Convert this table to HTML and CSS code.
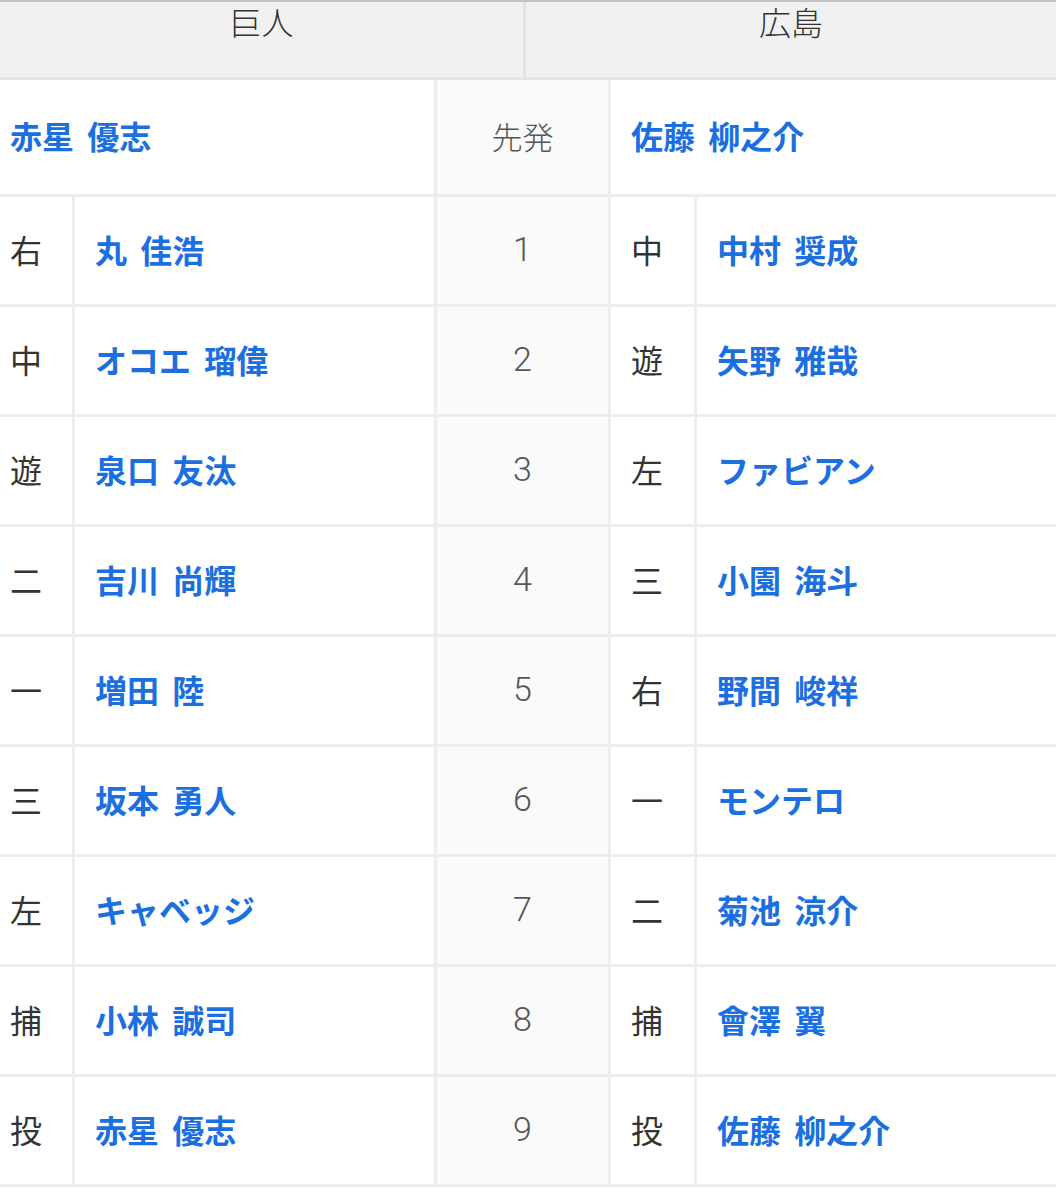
FILE: index.html
```html
<!DOCTYPE html>
<html lang="ja">
<head>
<meta charset="utf-8">
<title>スタメン</title>
<link rel="stylesheet" href="styles.css">
</head>
<body>
<div class="board">
  <div class="teams">
    <div class="team">巨人</div>
    <div class="team">広島</div>
  </div>
  <div class="lineup">
    <div class="cell name wide first">赤星 優志</div>
    <div class="cell num label">先発</div>
    <div class="cell name wide">佐藤 柳之介</div>

    <div class="cell pos first">右</div><div class="cell name">丸 佳浩</div><div class="cell num">1</div><div class="cell pos">中</div><div class="cell name">中村 奨成</div>
    <div class="cell pos first">中</div><div class="cell name">オコエ 瑠偉</div><div class="cell num">2</div><div class="cell pos">遊</div><div class="cell name">矢野 雅哉</div>
    <div class="cell pos first">遊</div><div class="cell name">泉口 友汰</div><div class="cell num">3</div><div class="cell pos">左</div><div class="cell name">ファビアン</div>
    <div class="cell pos first">二</div><div class="cell name">吉川 尚輝</div><div class="cell num">4</div><div class="cell pos">三</div><div class="cell name">小園 海斗</div>
    <div class="cell pos first">一</div><div class="cell name">増田 陸</div><div class="cell num">5</div><div class="cell pos">右</div><div class="cell name">野間 峻祥</div>
    <div class="cell pos first">三</div><div class="cell name">坂本 勇人</div><div class="cell num">6</div><div class="cell pos">一</div><div class="cell name">モンテロ</div>
    <div class="cell pos first">左</div><div class="cell name">キャベッジ</div><div class="cell num">7</div><div class="cell pos">二</div><div class="cell name">菊池 涼介</div>
    <div class="cell pos first">捕</div><div class="cell name">小林 誠司</div><div class="cell num">8</div><div class="cell pos">捕</div><div class="cell name">會澤 翼</div>
    <div class="cell pos first">投</div><div class="cell name">赤星 優志</div><div class="cell num">9</div><div class="cell pos">投</div><div class="cell name">佐藤 柳之介</div>
  </div>
</div>
</body>
</html>
```

FILE: styles.css
```css
html, body {
  margin: 0;
  padding: 0;
  background: #ffffff;
}

body {
  font-family: "Noto Sans CJK JP", "Noto Sans", sans-serif;
  color: #333333;
}

.board {
  width: 1056px;
}

.teams {
  display: grid;
  grid-template-columns: 523px 1fr;
  gap: 3px;
  background: #e2e2e2;
  border-top: 2px solid #c4c4c4;
  border-bottom: 3px solid #e4e4e4;
  height: 75px;
}

.team {
  background: #f1f1f1;
  text-align: center;
  font-size: 32px;
  font-weight: 300;
  line-height: 38px;
  color: #333333;
}

.lineup {
  display: grid;
  grid-template-columns: 72px 359px 171px 83px 1fr;
  grid-template-rows: 114px;
  grid-auto-rows: 107px;
  gap: 3px;
  background: #ededed;
  padding-bottom: 3px;
}

.cell {
  background: #ffffff;
  display: flex;
  align-items: center;
  font-size: 32px;
  line-height: 1;
  padding-left: 20px;
  padding-bottom: 4px;
}

.cell.first {
  padding-left: 10px;
}

.wide {
  grid-column: span 2;
}

.pos {
  color: #333333;
  font-weight: 400;
}

.name {
  color: #1b6fe0;
  font-weight: 700;
  word-spacing: 6px;
}

.num {
  background: #fafafa;
  justify-content: center;
  padding-left: 0;
  font-family: "Roboto", "Liberation Sans", sans-serif;
  font-weight: 300;
  font-size: 34px;
  color: #555555;
}

.num.label {
  font-family: "Noto Sans CJK JP", sans-serif;
  font-size: 31px;
  font-weight: 300;
  color: #555555;
}
```
